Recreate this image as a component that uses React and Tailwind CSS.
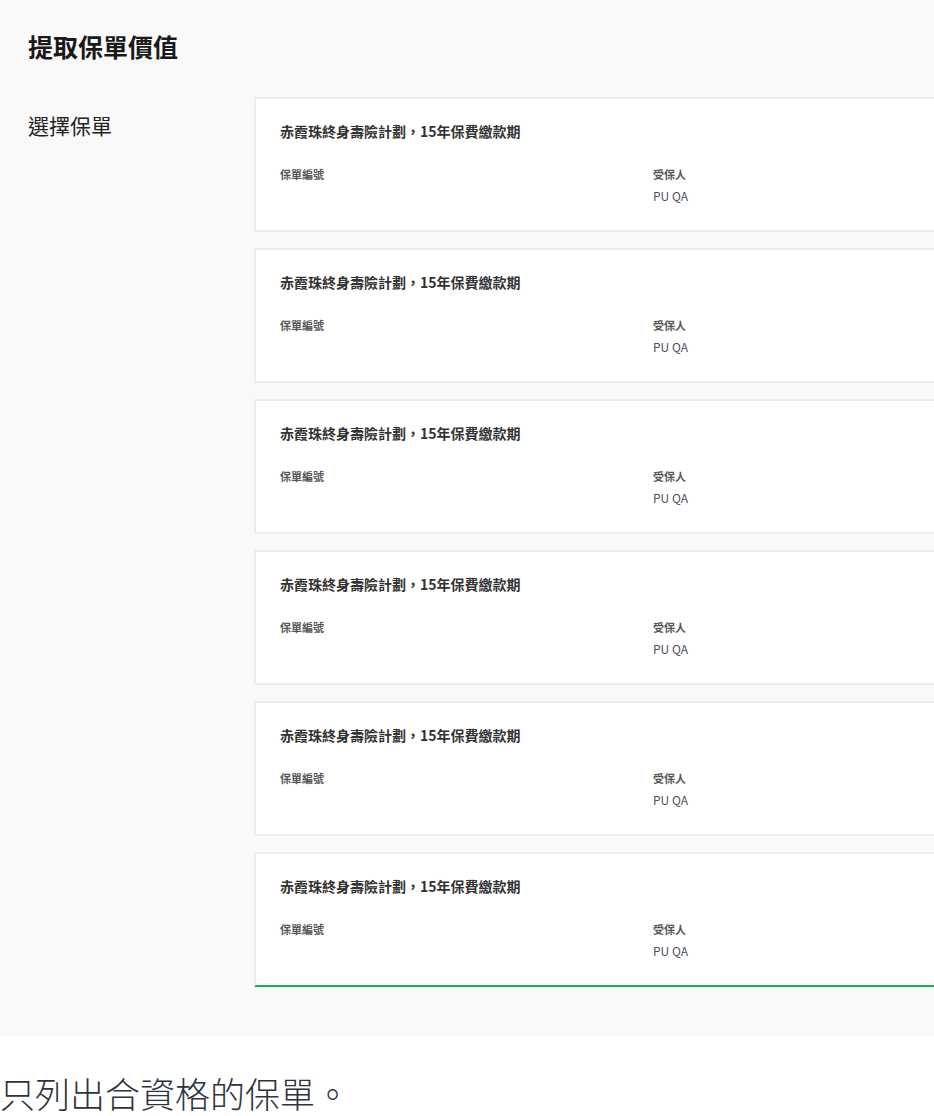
const policies = Array.from({ length: 6 }, (_, i) => ({
  id: i,
  name: "赤霞珠終身壽險計劃，15年保費繳款期",
  number: "",
  insured: "PU QA",
}));

const PolicyCard = ({ policy, selected }) => (
  <div
    className={`w-[798px] h-[135px] shrink-0 bg-white border-2 border-[#ededed] px-6 pt-[22px] ${
      selected ? "border-b-[#1fae55]" : ""
    }`}
  >
    <p className="text-[14px] leading-5 font-bold text-[#333333]">{policy.name}</p>
    <div className="mt-[25px] grid grid-cols-2">
      <div>
        <p className="text-[11px] leading-4 font-bold text-[#555555]">保單編號</p>
        <p className="mt-[6px] text-[12px] leading-4 text-[#4a5160]">{policy.number}</p>
      </div>
      <div>
        <p className="text-[11px] leading-4 font-bold text-[#555555]">受保人</p>
        <p className="mt-[6px] text-[12px] leading-4 text-[#4a5160]">{policy.insured}</p>
      </div>
    </div>
  </div>
);

export default function App() {
  return (
    <div
      className="w-[934px] h-[1116px] bg-white overflow-hidden"
      style={{ fontFamily: '"Noto Sans CJK TC", "Noto Sans", sans-serif' }}
    >
      <div className="bg-[#f9f9f9] pl-[28px] pt-[30px] pb-[49px]">
        <h1 className="text-[25px] leading-8 font-bold text-[#1a1a1a]">提取保單價值</h1>
        <div className="mt-[35px] flex">
          <div className="w-[226px] shrink-0">
            <p className="mt-[14px] text-[21px] leading-7 text-[#222222]">選擇保單</p>
          </div>
          <div className="flex flex-col gap-4">
            {policies.map((p, i) => (
              <PolicyCard key={p.id} policy={p} selected={i === policies.length - 1} />
            ))}
          </div>
        </div>
      </div>
      <p className="mt-[34px] text-[35px] leading-[46px] font-light text-[#2d3340]">
        只列出合資格的保單。
      </p>
    </div>
  );
}
